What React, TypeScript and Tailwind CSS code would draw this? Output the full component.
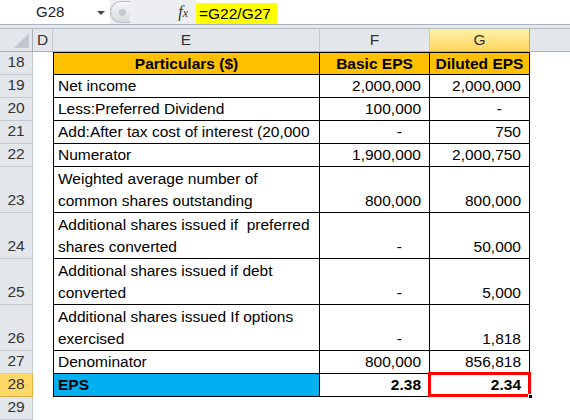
import React from 'react'

type Row = {
  n: number
  h: string
  e: React.ReactNode
  f: string
  g: string
  kind?: 'head' | 'eps'
}

const rows: Row[] = [
  { n: 18, h: 'h-[23px]', e: 'Particulars ($)', f: 'Basic EPS', g: 'Diluted EPS', kind: 'head' },
  { n: 19, h: 'h-[23px]', e: 'Net income', f: '2,000,000', g: '2,000,000' },
  { n: 20, h: 'h-[23px]', e: 'Less:Preferred Dividend', f: '100,000', g: '-' },
  { n: 21, h: 'h-[23px]', e: 'Add:After tax cost of interest (20,000', f: '-', g: '750' },
  { n: 22, h: 'h-[23px]', e: 'Numerator', f: '1,900,000', g: '2,000,750' },
  { n: 23, h: 'h-[46px]', e: <>Weighted average number of<br />common shares outstanding</>, f: '800,000', g: '800,000' },
  { n: 24, h: 'h-[46px]', e: <>Additional shares issued if&nbsp; preferred<br />shares converted</>, f: '-', g: '50,000' },
  { n: 25, h: 'h-[46px]', e: <>Additional shares issued if debt<br />converted</>, f: '-', g: '5,000' },
  { n: 26, h: 'h-[46px]', e: <>Additional shares issued If options<br />exercised</>, f: '-', g: '1,818' },
  { n: 27, h: 'h-[23px]', e: 'Denominator', f: '800,000', g: '856,818' },
  { n: 28, h: 'h-[23px]', e: 'EPS', f: '2.38', g: '2.34', kind: 'eps' },
]

const NumCell: React.FC<{ v: string; w: string; bold?: boolean; children?: React.ReactNode }> = ({ v, w, bold, children }) => (
  <div
    className={`${w} relative h-full border-r border-b border-black flex items-end justify-end leading-[22px] ${
      v === '-' ? 'pr-[27px]' : 'pr-[8px]'
    } ${bold ? 'font-bold' : ''}`}
  >
    {v}
    {children}
  </div>
)

const App: React.FC = () => {
  return (
    <div className="w-[570px] h-[420px] overflow-hidden bg-white text-[15.5px] text-black font-['Liberation_Sans',Arial,sans-serif]">
      {/* formula bar */}
      <div className="h-[25px] flex items-stretch bg-white border-b border-[#a9b2bd]">
        <div className="w-[110px] relative flex items-center">
          <span className="ml-[36px] text-[15px] text-[#1e1e1e]">G28</span>
          <span className="absolute left-[97px] top-[11px] w-0 h-0 border-l-[4px] border-r-[4px] border-t-[4px] border-l-transparent border-r-transparent border-t-[#444]" />
        </div>
        <div className="w-[86px] flex items-center bg-[#eceef1]">
          <div className="w-[20px] h-[22px] rounded-l-full bg-gradient-to-b from-[#f6f7f8] to-[#d7dbe0] border border-r-0 border-[#b9bfc7] flex items-center justify-center">
            <span className="w-[7px] h-[7px] rounded-full bg-[#c4c9cf] ml-[3px]" />
          </div>
          <span className="ml-auto mr-[8px] italic font-['Liberation_Serif',serif] text-[16px] text-[#333]">
            f<span className="text-[12px]">x</span>
          </span>
        </div>
        <div className="flex items-end">
          <div className="h-[21px] bg-[#ffff00] px-[3px] pr-[6px] flex items-center text-[15.5px] leading-none">=G22/G27</div>
        </div>
      </div>
      <div className="h-[4px] bg-[#e6e9ed] border-b border-[#b6bcc4]" />

      {/* column headers */}
      <div className="h-[23px] flex text-[15.5px] text-[#333] bg-[#e3e6ea] border-b border-[#a9b0ba]">
        <div className="w-[33px] h-full border-r border-[#a9b0ba] flex items-end justify-end pr-[3px] pb-[3px]">
          <svg width="15" height="15" viewBox="0 0 15 15">
            <path d="M15 0 L15 15 L0 15 Z" fill="#c3c8cf" />
          </svg>
        </div>
        <div className="w-[20px] border-r border-[#c5cad1] flex items-center justify-center">D</div>
        <div className="w-[267px] border-r border-[#c5cad1] flex items-center justify-center">E</div>
        <div className="w-[110px] border-r border-[#c5cad1] flex items-center justify-center">F</div>
        <div className="w-[100px] border-r border-[#c9a24a] bg-gradient-to-b from-[#fff1a8] to-[#ffd65c] flex items-center justify-center">G</div>
        <div className="flex-1" />
      </div>

      {/* grid rows */}
      {rows.map((r) => {
        const head = r.kind === 'head'
        const eps = r.kind === 'eps'
        return (
          <div key={r.n} className={`${r.h} flex`}>
            <div
              className={`w-[33px] h-full flex items-end justify-center pb-[1px] leading-[22px] text-[15.5px] text-[#333] border-r border-b ${
                eps ? 'bg-[#ffd967] border-[#e1ae44]' : 'bg-[#e3e6ea] border-[#c5cad1]'
              }`}
            >
              {r.n}
            </div>
            <div className="w-[20px] h-full" />
            {head ? (
              <>
                <div className="w-[267px] h-full bg-[#ffc000] border border-black flex items-center justify-center font-bold">{r.e}</div>
                <div className="w-[110px] h-full bg-[#ffc000] border-t border-r border-b border-black flex items-center justify-center font-bold">{r.f}</div>
                <div className="w-[100px] h-full bg-[#ffc000] border-t border-r border-b border-black flex items-center justify-center font-bold">{r.g}</div>
              </>
            ) : (
              <>
                <div
                  className={`w-[267px] h-full border-l border-r border-b border-black pl-[4px] flex items-end leading-[22px] whitespace-nowrap overflow-hidden ${
                    eps ? 'bg-[#00b0f0] font-bold' : ''
                  }`}
                >
                  <div>{r.e}</div>
                </div>
                <NumCell v={r.f} w="w-[110px]" bold={eps} />
                <NumCell v={r.g} w="w-[100px]" bold={eps}>
                  {eps && (
                    <>
                      <span className="absolute -left-[2px] -top-[2px] -right-[2px] -bottom-[1px] border-[3px] border-[#ff0000]" />
                      <span className="absolute -right-[4px] -bottom-[3px] w-[5px] h-[5px] bg-black border border-white" />
                    </>
                  )}
                </NumCell>
              </>
            )}
            <div className="flex-1" />
          </div>
        )
      })}
      <div className="h-[23px] flex">
        <div className="w-[33px] h-full flex items-end justify-center pb-[1px] leading-[22px] text-[15.5px] text-[#333] bg-[#e3e6ea] border-r border-b border-[#c5cad1]">29</div>
      </div>
    </div>
  )
}

export default App
